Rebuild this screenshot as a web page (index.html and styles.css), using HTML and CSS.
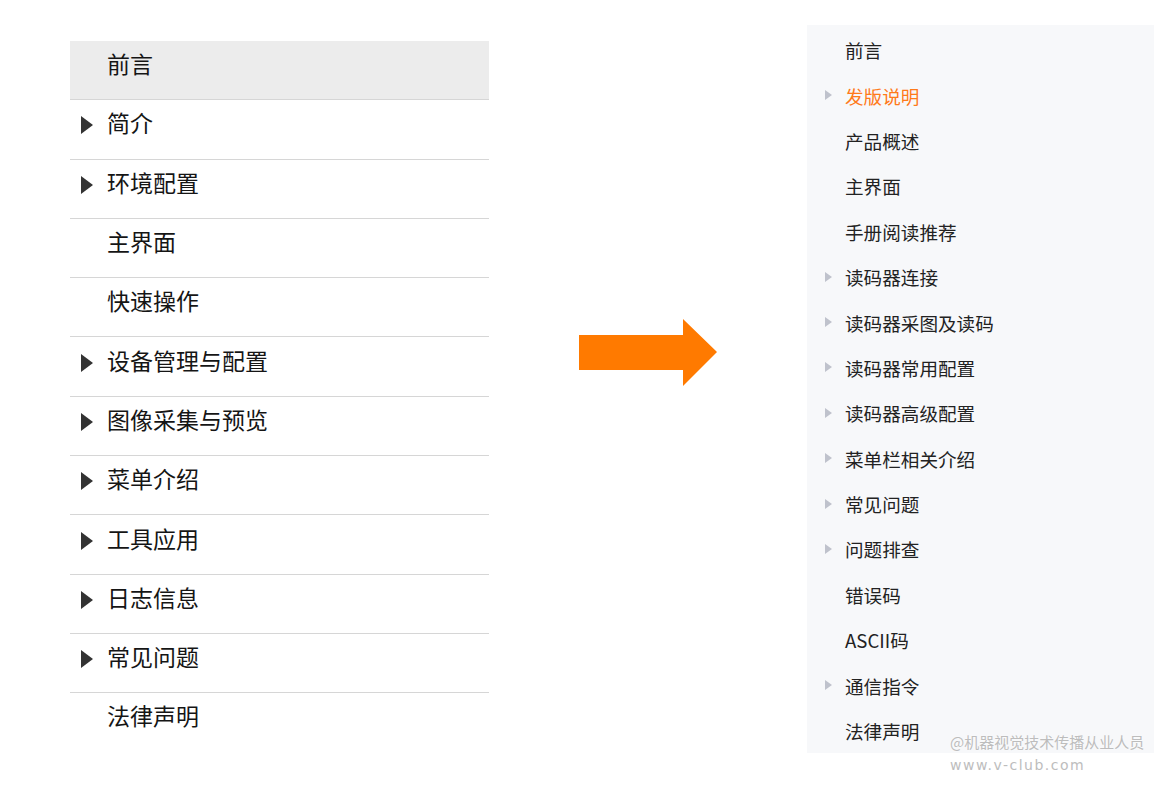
FILE: index.html
```html
<!DOCTYPE html>
<html lang="zh">
<head>
<meta charset="utf-8">
<link rel="stylesheet" href="styles.css">
</head>
<body>
<div class="page">
  <ul class="old-nav">
    <li class="row active"><span class="caret none"></span><span class="label">前言</span></li>
    <li class="row"><span class="caret"></span><span class="label">简介</span></li>
    <li class="row"><span class="caret"></span><span class="label">环境配置</span></li>
    <li class="row"><span class="caret none"></span><span class="label">主界面</span></li>
    <li class="row"><span class="caret none"></span><span class="label">快速操作</span></li>
    <li class="row"><span class="caret"></span><span class="label">设备管理与配置</span></li>
    <li class="row"><span class="caret"></span><span class="label">图像采集与预览</span></li>
    <li class="row"><span class="caret"></span><span class="label">菜单介绍</span></li>
    <li class="row"><span class="caret"></span><span class="label">工具应用</span></li>
    <li class="row"><span class="caret"></span><span class="label">日志信息</span></li>
    <li class="row"><span class="caret"></span><span class="label">常见问题</span></li>
    <li class="row last"><span class="caret none"></span><span class="label">法律声明</span></li>
  </ul>
  <div class="arrow-area">
    <svg class="arrow" width="140" height="70" viewBox="0 0 140 70"><polygon points="0,16 104,16 104,0 138,33 104,67 104,51 0,51" fill="#ff7a00"/></svg>
  </div>
  <div class="new-nav">
    <ul class="items">
      <li class="item"><span class="tri none"></span>前言</li>
      <li class="item current"><span class="tri"></span>发版说明</li>
      <li class="item"><span class="tri none"></span>产品概述</li>
      <li class="item"><span class="tri none"></span>主界面</li>
      <li class="item"><span class="tri none"></span>手册阅读推荐</li>
      <li class="item"><span class="tri"></span>读码器连接</li>
      <li class="item"><span class="tri"></span>读码器采图及读码</li>
      <li class="item"><span class="tri"></span>读码器常用配置</li>
      <li class="item"><span class="tri"></span>读码器高级配置</li>
      <li class="item"><span class="tri"></span>菜单栏相关介绍</li>
      <li class="item"><span class="tri"></span>常见问题</li>
      <li class="item"><span class="tri"></span>问题排查</li>
      <li class="item"><span class="tri none"></span>错误码</li>
      <li class="item"><span class="tri none"></span>ASCII码</li>
      <li class="item"><span class="tri"></span>通信指令</li>
      <li class="item"><span class="tri none"></span>法律声明</li>
    </ul>
    <div class="watermark">
      <div class="wm1">@机器视觉技术传播从业人员</div>
      <div class="wm2">www.v-club.com</div>
    </div>
  </div>
</div>
</body>
</html>
```

FILE: styles.css
```css
html, body {
  margin: 0;
  padding: 0;
  background: #ffffff;
}
body {
  font-family: "Noto Sans CJK SC", "Noto Sans", sans-serif;
  width: 1160px;
  height: 786px;
  overflow: hidden;
}
ul {
  list-style: none;
  margin: 0;
  padding: 0;
}
.page {
  display: flex;
  align-items: flex-start;
  padding-left: 70px;
}
.old-nav {
  width: 419px;
  margin-top: 41px;
}
.row {
  display: flex;
  align-items: center;
  height: 58.3px;
  border-bottom: 1px solid #d6d6d6;
  box-sizing: content-box;
}
.row.active {
  background: #ececec;
}
.row.last {
  border-bottom: none;
}
.row .caret {
  width: 0;
  height: 0;
  margin-left: 11px;
  margin-right: 14px;
  border-top: 9.5px solid transparent;
  border-bottom: 9.5px solid transparent;
  border-left: 12px solid #333333;
  margin-top: -8px;
}
.row .caret.none {
  border-left-color: transparent;
}
.row .label {
  font-size: 23px;
  color: #151515;
  line-height: 30px;
  margin-top: -14px;
}
.arrow-area {
  width: 318px;
  height: 786px;
  display: flex;
  align-items: flex-start;
}
.arrow {
  display: block;
  margin-top: 319px;
  margin-left: 90px;
}
.new-nav {
  position: relative;
  width: 347px;
  height: 728px;
  margin-top: 25px;
  background: #f7f8fa;
  box-sizing: border-box;
  padding-top: 2px;
}
.item {
  height: 45.4px;
  display: flex;
  align-items: center;
  font-size: 18.6px;
  color: #222222;
  white-space: nowrap;
}
.item.current {
  color: #ff7a1a;
}
.tri {
  width: 0;
  height: 0;
  margin-left: 18px;
  margin-right: 13px;
  border-top: 5px solid transparent;
  border-bottom: 5px solid transparent;
  border-left: 7px solid #bfc2cc;
}
.tri.none {
  border-left-color: transparent;
}
.watermark {
  position: absolute;
  left: 143px;
  top: 706px;
  color: #bdbdbd;
  font-size: 15px;
  line-height: 22px;
  text-shadow: 0 0 2px #ffffff;
  white-space: nowrap;
}
.wm1 {
  font-family: "Noto Sans CJK SC", "Liberation Serif", serif;
  letter-spacing: 0;
}
.wm2 {
  font-family: "DejaVu Sans", sans-serif;
  letter-spacing: 1.5px;
  font-size: 14px;
  margin-top: 1px;
}
```
